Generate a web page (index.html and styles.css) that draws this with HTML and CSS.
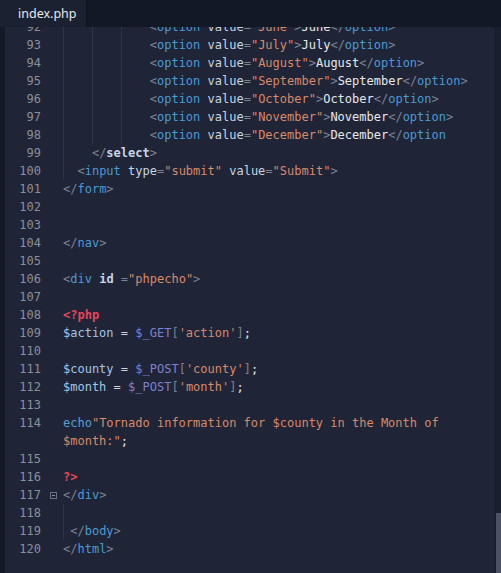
FILE: index.html
```html
<!DOCTYPE html>
<html>
<head>
<meta charset="utf-8">
<link rel="stylesheet" href="styles.css">
</head>
<body>
<div class="window">
  <div class="tabbar"><div class="tab">index.php</div><div class="tabrest"></div></div>
  <div class="editor">
    <div class="strip"></div>
    <div class="code">
      <div class="row"><span class="num">92</span><span class="fold"></span><span class="src"><span class="g">    </span><span class="g">    </span><span class="g">    </span><span class="p">&lt;</span><span class="t">option</span> <span class="a">value</span><span class="p">=</span><span class="s">"June"</span><span class="p">&gt;</span>June<span class="p">&lt;/</span><span class="t">option</span><span class="p">&gt;</span></span></div>
      <div class="row"><span class="num">93</span><span class="fold"></span><span class="src"><span class="g">    </span><span class="g">    </span><span class="g">    </span><span class="p">&lt;</span><span class="t">option</span> <span class="a">value</span><span class="p">=</span><span class="s">"July"</span><span class="p">&gt;</span>July<span class="p">&lt;/</span><span class="t">option</span><span class="p">&gt;</span></span></div>
      <div class="row"><span class="num">94</span><span class="fold"></span><span class="src"><span class="g">    </span><span class="g">    </span><span class="g">    </span><span class="p">&lt;</span><span class="t">option</span> <span class="a">value</span><span class="p">=</span><span class="s">"August"</span><span class="p">&gt;</span>August<span class="p">&lt;/</span><span class="t">option</span><span class="p">&gt;</span></span></div>
      <div class="row"><span class="num">95</span><span class="fold"></span><span class="src"><span class="g">    </span><span class="g">    </span><span class="g">    </span><span class="p">&lt;</span><span class="t">option</span> <span class="a">value</span><span class="p">=</span><span class="s">"September"</span><span class="p">&gt;</span>September<span class="p">&lt;/</span><span class="t">option</span><span class="p">&gt;</span></span></div>
      <div class="row"><span class="num">96</span><span class="fold"></span><span class="src"><span class="g">    </span><span class="g">    </span><span class="g">    </span><span class="p">&lt;</span><span class="t">option</span> <span class="a">value</span><span class="p">=</span><span class="s">"October"</span><span class="p">&gt;</span>October<span class="p">&lt;/</span><span class="t">option</span><span class="p">&gt;</span></span></div>
      <div class="row"><span class="num">97</span><span class="fold"></span><span class="src"><span class="g">    </span><span class="g">    </span><span class="g">    </span><span class="p">&lt;</span><span class="t">option</span> <span class="a">value</span><span class="p">=</span><span class="s">"November"</span><span class="p">&gt;</span>November<span class="p">&lt;/</span><span class="t">option</span><span class="p">&gt;</span></span></div>
      <div class="row"><span class="num">98</span><span class="fold"></span><span class="src"><span class="g">    </span><span class="g">    </span><span class="g">    </span><span class="p">&lt;</span><span class="t">option</span> <span class="a">value</span><span class="p">=</span><span class="s">"December"</span><span class="p">&gt;</span>December<span class="p">&lt;/</span><span class="t">option</span></span></div>
      <div class="row"><span class="num">99</span><span class="fold"></span><span class="src"><span class="g">    </span><span class="p">&lt;/</span><span class="a b">select</span><span class="p">&gt;</span></span></div>
      <div class="row"><span class="num">100</span><span class="fold"></span><span class="src"><span class="g">  </span><span class="p">&lt;</span><span class="t">input</span> <span class="a">type</span><span class="p">=</span><span class="s">"submit"</span> <span class="a">value</span><span class="p">=</span><span class="s">"Submit"</span><span class="p">&gt;</span></span></div>
      <div class="row"><span class="num">101</span><span class="fold"></span><span class="src"><span class="p">&lt;/</span><span class="t">form</span><span class="p">&gt;</span></span></div>
      <div class="row"><span class="num">102</span><span class="fold"></span><span class="src"></span></div>
      <div class="row"><span class="num">103</span><span class="fold"></span><span class="src"></span></div>
      <div class="row"><span class="num">104</span><span class="fold"></span><span class="src"><span class="p">&lt;/</span><span class="t">nav</span><span class="p">&gt;</span></span></div>
      <div class="row"><span class="num">105</span><span class="fold"></span><span class="src"></span></div>
      <div class="row"><span class="num">106</span><span class="fold"></span><span class="src"><span class="p">&lt;</span><span class="t">div</span> <span class="a b">id</span> <span class="p">=</span><span class="s">"phpecho"</span><span class="p">&gt;</span></span></div>
      <div class="row"><span class="num">107</span><span class="fold"></span><span class="src"></span></div>
      <div class="row"><span class="num">108</span><span class="fold"></span><span class="src"><span class="php">&lt;?php</span></span></div>
      <div class="row"><span class="num">109</span><span class="fold"></span><span class="src"><span class="v">$action</span> <span class="o">=</span> <span class="gl">$_GET</span><span class="p">[</span><span class="s">'action'</span><span class="p">]</span>;</span></div>
      <div class="row"><span class="num">110</span><span class="fold"></span><span class="src"></span></div>
      <div class="row"><span class="num">111</span><span class="fold"></span><span class="src"><span class="v">$county</span> <span class="o">=</span> <span class="gl">$_POST</span><span class="p">[</span><span class="s">'county'</span><span class="p">]</span>;</span></div>
      <div class="row"><span class="num">112</span><span class="fold"></span><span class="src"><span class="v">$month</span> <span class="o">=</span> <span class="gl">$_POST</span><span class="p">[</span><span class="s">'month'</span><span class="p">]</span>;</span></div>
      <div class="row"><span class="num">113</span><span class="fold"></span><span class="src"></span></div>
      <div class="row"><span class="num">114</span><span class="fold"></span><span class="src"><span class="k">echo</span><span class="s">"Tornado information for $county in the Month of</span></span></div>
      <div class="row"><span class="num"></span><span class="fold"></span><span class="src"><span class="s">$month:"</span>;</span></div>
      <div class="row"><span class="num">115</span><span class="fold"></span><span class="src"></span></div>
      <div class="row"><span class="num">116</span><span class="fold"></span><span class="src"><span class="php">?&gt;</span></span></div>
      <div class="row"><span class="num">117</span><span class="fold"><span class="box"></span></span><span class="src"><span class="p">&lt;/</span><span class="t">div</span><span class="p">&gt;</span></span></div>
      <div class="row"><span class="num">118</span><span class="fold"></span><span class="src"><span class="g"> </span></span></div>
      <div class="row"><span class="num">119</span><span class="fold"></span><span class="src"><span class="g"> </span><span class="p">&lt;/</span><span class="t">body</span><span class="p">&gt;</span></span></div>
      <div class="row"><span class="num">120</span><span class="fold"></span><span class="src"><span class="p">&lt;/</span><span class="t">html</span><span class="p">&gt;</span></span></div>
    </div>
    <div class="scrollbar"><div class="thumb"></div></div>
  </div>
</div>
</body>
</html>
```
FILE: styles.css
```css
html, body {
  margin: 0;
  padding: 0;
  background: #1f2436;
}
.window {
  width: 501px;
  height: 573px;
  display: flex;
  flex-direction: column;
  overflow: hidden;
  background: #1f2436;
}
.tabbar {
  height: 27px;
  display: flex;
  flex-shrink: 0;
  position: relative;
  z-index: 2;
  background: #131827;
}
.tab {
  width: 68px;
  padding-left: 18px;
  background: #1c2131;
  color: #e4e7ee;
  font-family: "Noto Sans", "Liberation Sans", sans-serif;
  font-size: 12.5px;
  line-height: 27px;
  border-right: 1px solid #0f1320;
}
.tabrest {
  flex: 1;
}
.editor {
  flex: 1;
  display: flex;
  position: relative;
  overflow: hidden;
}
.strip {
  width: 5px;
  flex-shrink: 0;
  background: #141928;
}
.code {
  flex: 1;
  margin-top: -9px;
  font-family: "DejaVu Sans Mono", monospace;
  font-size: 12px;
  line-height: 18px;
  color: #e6e8ec;
}
.row {
  display: flex;
  height: 18px;
}
.num {
  width: 36px;
  text-align: right;
  color: #8b909c;
  flex-shrink: 0;
}
.fold {
  width: 22px;
  flex-shrink: 0;
  position: relative;
}
.box {
  position: absolute;
  left: 9px;
  top: 6px;
  width: 5px;
  height: 5px;
  border: 1px solid #6c7282;
}
.box::after {
  content: "";
  position: absolute;
  left: 1px;
  top: 2px;
  width: 3px;
  height: 1px;
  background: #8b909c;
}
.src {
  white-space: pre;
}
.g {
  display: inline-block;
  height: 18px;
  vertical-align: top;
  background: linear-gradient(to right, #30364a 1px, transparent 1px);
}
.p { color: #7c8394; }
.t { color: #4b9bd5; }
.a { color: #c9d5e4; }
.b { font-weight: bold; }
.s { color: #d88a6b; }
.php { color: #e5465b; font-weight: bold; }
.v { color: #a3c6e6; }
.gl { color: #7f80cf; }
.o { color: #cfd3da; }
.k { color: #5a9fd8; }
.scrollbar {
  position: absolute;
  right: 0;
  top: 0;
  bottom: 0;
  width: 7px;
  background: #1a1f30;
  border-left: 1px solid #232839;
}
.thumb {
  position: absolute;
  left: 2px;
  right: 0;
  bottom: 0;
  height: 60px;
  background: #4c5163;
}
```
